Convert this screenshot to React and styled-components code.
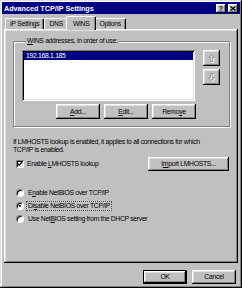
import React from 'react';
import styled, { createGlobalStyle } from 'styled-components';

const GlobalStyle = createGlobalStyle`
  html, body {
    margin: 0;
    padding: 0;
    background: #c0c0c0;
  }
`;

const raised = `
  box-shadow: inset -1px -1px #000, inset 1px 1px #fff, inset -2px -2px #808080, inset 2px 2px #dfdfdf;
`;

const Window = styled.div`
  width: 242px;
  height: 288px;
  box-sizing: border-box;
  padding: 2px;
  background: #c0c0c0;
  box-shadow: inset -1px -1px #000, inset 1px 1px #dfdfdf, inset -2px -2px #808080, inset 2px 2px #fff;
  display: flex;
  flex-direction: column;
  font-family: 'Liberation Sans', Arial, sans-serif;
  font-size: 6.8px;
  letter-spacing: -0.3px;
  color: #000;
`;

const TitleBar = styled.div`
  height: 12px;
  background: #000080;
  display: flex;
  align-items: center;
  justify-content: space-between;
  padding: 0 2px 0 2px;
`;

const Title = styled.span`
  color: #fff;
  font-weight: bold;
  font-size: 7.2px;
  letter-spacing: 0;
`;

const TitleButtons = styled.div`
  display: flex;
  gap: 2px;
`;

const TitleButton = styled.div`
  width: 10px;
  height: 9px;
  box-sizing: border-box;
  background: #c0c0c0;
  ${raised}
  display: flex;
  align-items: center;
  justify-content: center;
  font-weight: bold;
  font-size: 7px;
  letter-spacing: 0;
  line-height: 9px;
`;

const Body = styled.div`
  flex: 1;
  display: flex;
  flex-direction: column;
  padding: 2px 2px 0 2px;
`;

const TabRow = styled.div`
  display: flex;
  align-items: flex-end;
  height: 13px;
  padding-left: 1px;
  position: relative;
  z-index: 1;
`;

const Tab = styled.div`
  height: ${p => (p.$active ? '14px' : '11px')};
  margin: ${p => (p.$active ? '0 -2px -1px -2px' : '0')};
  padding: 0 ${p => (p.$active ? '6px' : '4px')};
  box-sizing: border-box;
  background: #c0c0c0;
  border-top: 1px solid #fff;
  border-left: 1px solid #fff;
  border-right: 1px solid #000;
  border-radius: 2px 2px 0 0;
  box-shadow: inset -1px 0 #808080;
  display: flex;
  align-items: center;
  line-height: 8px;
  position: relative;
  z-index: ${p => (p.$active ? 2 : 0)};
`;

const Panel = styled.div`
  height: 234px;
  box-sizing: border-box;
  padding: 8px 8px 0 9px;
  background: #c0c0c0;
  box-shadow: inset -1px -1px #000, inset 1px 1px #fff, inset -2px -2px #808080, inset 2px 2px #dfdfdf;
`;

const Group = styled.fieldset`
  margin: 0;
  padding: 5px 9px 7px 8px;
  border: 1px solid #808080;
  box-shadow: inset 1px 1px #fff, 1px 1px #fff;
`;

const Legend = styled.legend`
  padding: 0 1px;
  margin-left: 4px;
  line-height: 8px;
  background: #c0c0c0;
  position: relative;
`;

const Key = styled.span`
  text-decoration: underline;
`;

const ListRow = styled.div`
  display: flex;
  gap: 8px;
`;

const ListBox = styled.div`
  width: 173px;
  height: 51px;
  box-sizing: border-box;
  padding: 2px;
  background: #fff;
  box-shadow: inset 1px 1px #808080, inset -1px -1px #fff, inset 2px 2px #000, inset -2px -2px #dfdfdf;
`;

const ListItem = styled.div`
  height: 8px;
  line-height: 8px;
  padding-left: 2px;
  background: ${p => (p.$selected ? '#000080' : 'transparent')};
  color: ${p => (p.$selected ? '#fff' : '#000')};
`;

const ArrowColumn = styled.div`
  display: flex;
  flex-direction: column;
  gap: 3px;
`;

const ArrowButton = styled.div`
  width: 17px;
  height: 16px;
  box-sizing: border-box;
  ${raised}
  display: flex;
  align-items: center;
  justify-content: center;
`;

const ButtonRow = styled.div`
  display: flex;
  justify-content: flex-end;
  gap: 4px;
  margin-top: 3px;
  padding-right: 24px;
`;

const Button = styled.div`
  width: ${p => p.$w || 44}px;
  height: ${p => p.$h || 15}px;
  box-sizing: border-box;
  background: #c0c0c0;
  ${raised}
  border: ${p => (p.$default ? '1px solid #000' : 'none')};
  display: flex;
  align-items: center;
  justify-content: center;
  line-height: 8px;
`;

const Info = styled.p`
  margin: 11px 0 0 0;
  line-height: 8px;
  width: 205px;
`;

const CheckRow = styled.div`
  display: flex;
  align-items: center;
  justify-content: space-between;
  margin-top: 3px;
  padding-left: 3px;
  padding-right: 1px;
`;

const Option = styled.label`
  display: flex;
  align-items: center;
  gap: 3px;
  line-height: 8px;
`;

const CheckBox = styled.span`
  width: 8px;
  height: 8px;
  box-sizing: border-box;
  background: #fff;
  box-shadow: inset 1px 1px #808080, inset -1px -1px #fff, inset 2px 2px #000, inset -2px -2px #dfdfdf;
  display: flex;
  align-items: center;
  justify-content: center;
`;

const RadioList = styled.div`
  display: flex;
  flex-direction: column;
  gap: 5px;
  margin-top: 18px;
  padding-left: 3px;
`;

const Radio = styled.span`
  width: 8px;
  height: 8px;
  box-sizing: border-box;
  border-radius: 50%;
  background: #fff;
  border: 1px solid;
  border-color: #808080 #fff #fff #808080;
  box-shadow: inset 1px 1px #000;
  display: flex;
  align-items: center;
  justify-content: center;

  &::after {
    content: '';
    display: ${p => (p.$checked ? 'block' : 'none')};
    width: 2px;
    height: 2px;
    border-radius: 50%;
    background: #000;
  }
`;

const RadioText = styled.span`
  padding: 0 1px;
  outline: ${p => (p.$focused ? '1px dotted #555' : 'none')};
`;

const Footer = styled.div`
  display: flex;
  justify-content: flex-end;
  gap: 5px;
  padding: 7px 2px 0 0;
`;

const UpArrow = () => (
  <svg width="7" height="9" viewBox="0 0 7 9">
    <path d="M4.5 1.5 L7.5 4.5 L5.5 4.5 L5.5 8.5 L3.5 8.5 L3.5 4.5 L1.5 4.5 Z" fill="none" stroke="#fff" strokeWidth="0.7" />
    <path d="M3.5 0.5 L6.5 3.5 L4.5 3.5 L4.5 7.5 L2.5 7.5 L2.5 3.5 L0.5 3.5 Z" fill="none" stroke="#8a8a8a" strokeWidth="0.7" />
  </svg>
);

const DownArrow = () => (
  <svg width="7" height="9" viewBox="0 0 7 9">
    <path d="M4.5 8.5 L7.5 5.5 L5.5 5.5 L5.5 1.5 L3.5 1.5 L3.5 5.5 L1.5 5.5 Z" fill="none" stroke="#fff" strokeWidth="0.7" />
    <path d="M3.5 7.5 L6.5 4.5 L4.5 4.5 L4.5 0.5 L2.5 0.5 L2.5 4.5 L0.5 4.5 Z" fill="none" stroke="#8a8a8a" strokeWidth="0.7" />
  </svg>
);

const Check = () => (
  <svg width="6" height="6" viewBox="0 0 6 6">
    <path d="M0.8 2.6 L2.3 4.2 L5.2 1" fill="none" stroke="#000" strokeWidth="1.2" />
  </svg>
);

const CloseGlyph = () => (
  <svg width="6" height="5" viewBox="0 0 6 5">
    <path d="M0.5 0.5 L5.5 4.5 M5.5 0.5 L0.5 4.5" stroke="#000" strokeWidth="1.2" />
  </svg>
);

export default function App() {
  return (
    <>
      <GlobalStyle />
      <Window>
        <TitleBar>
          <Title>Advanced TCP/IP Settings</Title>
          <TitleButtons>
            <TitleButton>?</TitleButton>
            <TitleButton>
              <CloseGlyph />
            </TitleButton>
          </TitleButtons>
        </TitleBar>
        <Body>
          <TabRow>
            <Tab>IP Settings</Tab>
            <Tab>DNS</Tab>
            <Tab $active>WINS</Tab>
            <Tab>Options</Tab>
          </TabRow>
          <Panel>
            <Group>
              <Legend>
                <Key>W</Key>INS addresses, in order of use:
              </Legend>
              <ListRow>
                <ListBox>
                  <ListItem $selected>192.168.1.185</ListItem>
                </ListBox>
                <ArrowColumn>
                  <ArrowButton>
                    <UpArrow />
                  </ArrowButton>
                  <ArrowButton>
                    <DownArrow />
                  </ArrowButton>
                </ArrowColumn>
              </ListRow>
              <ButtonRow>
                <Button>
                  <span><Key>A</Key>dd...</span>
                </Button>
                <Button>
                  <span><Key>E</Key>dit...</span>
                </Button>
                <Button>
                  <span>Remo<Key>v</Key>e</span>
                </Button>
              </ButtonRow>
            </Group>
            <Info>
              If LMHOSTS lookup is enabled, it applies to all connections for which TCP/IP is enabled.
            </Info>
            <CheckRow>
              <Option>
                <CheckBox>
                  <Check />
                </CheckBox>
                <span>Enable <Key>L</Key>MHOSTS lookup</span>
              </Option>
              <Button $w={81} $h={14}>
                <span>I<Key>m</Key>port LMHOSTS...</span>
              </Button>
            </CheckRow>
            <RadioList>
              <Option>
                <Radio />
                <RadioText>E<Key>n</Key>able NetBIOS over TCP/IP</RadioText>
              </Option>
              <Option>
                <Radio $checked />
                <RadioText $focused>Di<Key>s</Key>able NetBIOS over TCP/IP</RadioText>
              </Option>
              <Option>
                <Radio />
                <RadioText>Use Net<Key>B</Key>IOS setting from the DHCP server</RadioText>
              </Option>
            </RadioList>
          </Panel>
          <Footer>
            <Button $default $h={14}>OK</Button>
            <Button $h={14}>Cancel</Button>
          </Footer>
        </Body>
      </Window>
    </>
  );
}
